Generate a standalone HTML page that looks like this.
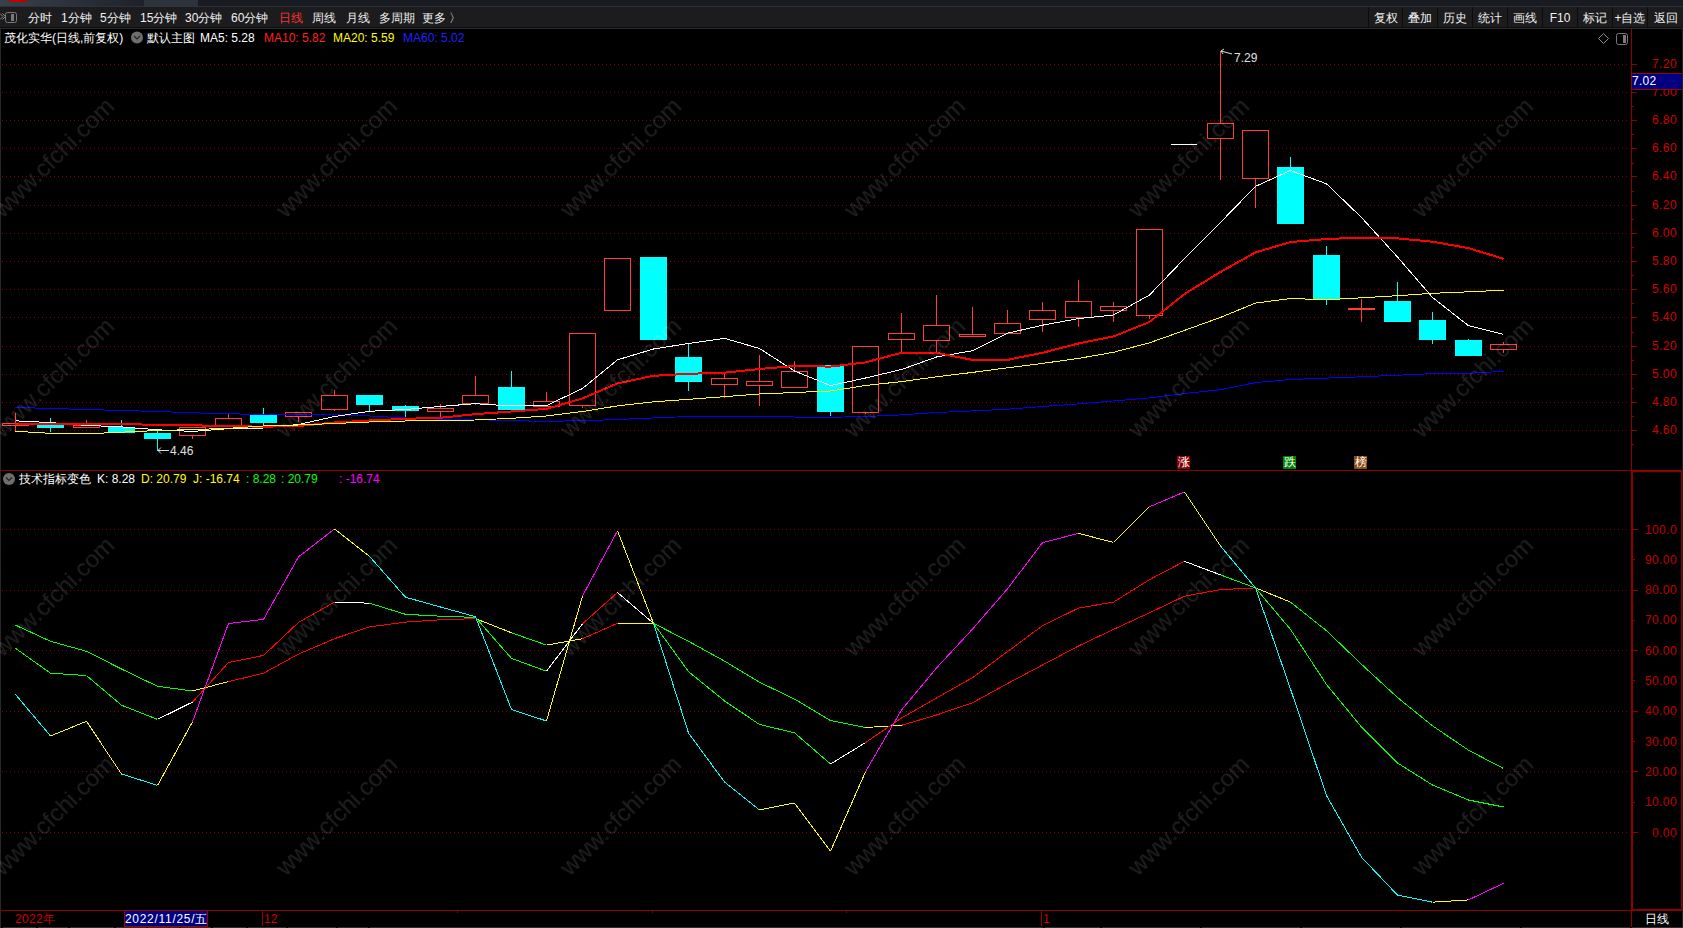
<!DOCTYPE html><html><head><meta charset="utf-8"><style>
html,body{margin:0;padding:0;background:#000;width:1683px;height:928px;overflow:hidden;}
body{position:relative;font-family:"Liberation Sans",sans-serif;}
.t{position:absolute;white-space:nowrap;font-size:12px;line-height:14px;color:#fff;}
svg{position:absolute;left:0;top:0;}
</style></head><body>
<svg width="1683" height="928" viewBox="0 0 1683 928">
<defs><linearGradient id="tg" x1="0" x2="1" y1="0" y2="0"><stop offset="0" stop-color="#39414c"/><stop offset="1" stop-color="#1d222a"/></linearGradient></defs>
<rect x="0" y="0" width="1683" height="6" fill="#181b22"/>
<rect x="0" y="0" width="144" height="6" fill="url(#tg)"/>
<rect x="144" y="0" width="54" height="6" fill="#2c333d"/>
<rect x="9" y="0" width="18" height="2" rx="1" fill="#c00000"/>
<rect x="0" y="6" width="1683" height="1" fill="#2e3238"/>
<rect x="0" y="7" width="1683" height="20" fill="#1c1c1e"/>
<rect x="0" y="27" width="1683" height="1" fill="#0e0e0e"/>
<rect x="0" y="28" width="1683" height="1" fill="#2a2a2a"/>
<rect x="1368" y="7" width="1" height="20" fill="#0c0c0c"/>
<rect x="1402" y="7" width="1" height="20" fill="#0c0c0c"/>
<rect x="1437" y="7" width="1" height="20" fill="#0c0c0c"/>
<rect x="1472" y="7" width="1" height="20" fill="#0c0c0c"/>
<rect x="1507" y="7" width="1" height="20" fill="#0c0c0c"/>
<rect x="1542" y="7" width="1" height="20" fill="#0c0c0c"/>
<rect x="1577" y="7" width="1" height="20" fill="#0c0c0c"/>
<rect x="1612" y="7" width="1" height="20" fill="#0c0c0c"/>
<rect x="1647" y="7" width="1" height="20" fill="#0c0c0c"/>
<rect x="5.5" y="12.5" width="11" height="10" rx="2" fill="none" stroke="#7a7a7a" stroke-width="1"/>
<rect x="11" y="14" width="3" height="7" fill="#7a7a7a"/>
<path d="M0 13.5 L3 16.5 L0 19.5 M2.5 13.5 L5.5 16.5 L2.5 19.5" fill="none" stroke="#8a8a8a" stroke-width="1"/>
<rect x="0" y="29" width="1" height="899" fill="#282828"/>
<rect x="1682" y="29" width="1" height="899" fill="#222"/>
<g shape-rendering="crispEdges">
<line x1="2" y1="64.5" x2="1630" y2="64.5" stroke="#8c0000" stroke-width="1" stroke-dasharray="1 3"/>
<line x1="2" y1="92.5" x2="1630" y2="92.5" stroke="#8c0000" stroke-width="1" stroke-dasharray="1 3"/>
<line x1="2" y1="120.5" x2="1630" y2="120.5" stroke="#8c0000" stroke-width="1" stroke-dasharray="1 3"/>
<line x1="2" y1="148.5" x2="1630" y2="148.5" stroke="#8c0000" stroke-width="1" stroke-dasharray="1 3"/>
<line x1="2" y1="176.5" x2="1630" y2="176.5" stroke="#8c0000" stroke-width="1" stroke-dasharray="1 3"/>
<line x1="2" y1="205.5" x2="1630" y2="205.5" stroke="#8c0000" stroke-width="1" stroke-dasharray="1 3"/>
<line x1="2" y1="233.5" x2="1630" y2="233.5" stroke="#8c0000" stroke-width="1" stroke-dasharray="1 3"/>
<line x1="2" y1="261.5" x2="1630" y2="261.5" stroke="#8c0000" stroke-width="1" stroke-dasharray="1 3"/>
<line x1="2" y1="289.5" x2="1630" y2="289.5" stroke="#8c0000" stroke-width="1" stroke-dasharray="1 3"/>
<line x1="2" y1="317.5" x2="1630" y2="317.5" stroke="#8c0000" stroke-width="1" stroke-dasharray="1 3"/>
<line x1="2" y1="346.5" x2="1630" y2="346.5" stroke="#8c0000" stroke-width="1" stroke-dasharray="1 3"/>
<line x1="2" y1="374.5" x2="1630" y2="374.5" stroke="#8c0000" stroke-width="1" stroke-dasharray="1 3"/>
<line x1="2" y1="402.5" x2="1630" y2="402.5" stroke="#8c0000" stroke-width="1" stroke-dasharray="1 3"/>
<line x1="2" y1="430.5" x2="1630" y2="430.5" stroke="#8c0000" stroke-width="1" stroke-dasharray="1 3"/>
<line x1="2" y1="529.5" x2="1630" y2="529.5" stroke="#8c0000" stroke-width="1" stroke-dasharray="1 3"/>
<line x1="2" y1="590.5" x2="1630" y2="590.5" stroke="#8c0000" stroke-width="1" stroke-dasharray="1 3"/>
<line x1="2" y1="650.5" x2="1630" y2="650.5" stroke="#8c0000" stroke-width="1" stroke-dasharray="1 3"/>
<line x1="2" y1="711.5" x2="1630" y2="711.5" stroke="#8c0000" stroke-width="1" stroke-dasharray="1 3"/>
<line x1="2" y1="771.5" x2="1630" y2="771.5" stroke="#8c0000" stroke-width="1" stroke-dasharray="1 3"/>
<line x1="2" y1="832.5" x2="1630" y2="832.5" stroke="#8c0000" stroke-width="1" stroke-dasharray="1 3"/>
<rect x="1631" y="29" width="1" height="898" fill="#900000"/>
<rect x="1" y="470" width="1630" height="1" fill="#900000"/>
<rect x="1" y="910" width="1630" height="1" fill="#900000"/>
<rect x="1632" y="470" width="50" height="2" fill="#900000"/>
<rect x="1632" y="470" width="1" height="441" fill="#900000"/>
<rect x="1681" y="470" width="1" height="441" fill="#900000"/>
<rect x="1632" y="909" width="50" height="2" fill="#900000"/>
<rect x="1632" y="64" width="5" height="1" fill="#900000"/>
<rect x="1632" y="78" width="2" height="1" fill="#900000"/>
<rect x="1632" y="92" width="5" height="1" fill="#900000"/>
<rect x="1632" y="106" width="2" height="1" fill="#900000"/>
<rect x="1632" y="120" width="5" height="1" fill="#900000"/>
<rect x="1632" y="134" width="2" height="1" fill="#900000"/>
<rect x="1632" y="148" width="5" height="1" fill="#900000"/>
<rect x="1632" y="163" width="2" height="1" fill="#900000"/>
<rect x="1632" y="176" width="5" height="1" fill="#900000"/>
<rect x="1632" y="191" width="2" height="1" fill="#900000"/>
<rect x="1632" y="205" width="5" height="1" fill="#900000"/>
<rect x="1632" y="219" width="2" height="1" fill="#900000"/>
<rect x="1632" y="233" width="5" height="1" fill="#900000"/>
<rect x="1632" y="247" width="2" height="1" fill="#900000"/>
<rect x="1632" y="261" width="5" height="1" fill="#900000"/>
<rect x="1632" y="275" width="2" height="1" fill="#900000"/>
<rect x="1632" y="289" width="5" height="1" fill="#900000"/>
<rect x="1632" y="303" width="2" height="1" fill="#900000"/>
<rect x="1632" y="317" width="5" height="1" fill="#900000"/>
<rect x="1632" y="332" width="2" height="1" fill="#900000"/>
<rect x="1632" y="346" width="5" height="1" fill="#900000"/>
<rect x="1632" y="360" width="2" height="1" fill="#900000"/>
<rect x="1632" y="374" width="5" height="1" fill="#900000"/>
<rect x="1632" y="388" width="2" height="1" fill="#900000"/>
<rect x="1632" y="402" width="5" height="1" fill="#900000"/>
<rect x="1632" y="416" width="2" height="1" fill="#900000"/>
<rect x="1632" y="430" width="5" height="1" fill="#900000"/>
<rect x="1632" y="444" width="2" height="1" fill="#900000"/>
<rect x="1632" y="832" width="6" height="1" fill="#900000"/>
<rect x="1632" y="802" width="3" height="1" fill="#900000"/>
<rect x="1632" y="771" width="6" height="1" fill="#900000"/>
<rect x="1632" y="741" width="3" height="1" fill="#900000"/>
<rect x="1632" y="711" width="6" height="1" fill="#900000"/>
<rect x="1632" y="680" width="3" height="1" fill="#900000"/>
<rect x="1632" y="650" width="6" height="1" fill="#900000"/>
<rect x="1632" y="620" width="3" height="1" fill="#900000"/>
<rect x="1632" y="590" width="6" height="1" fill="#900000"/>
<rect x="1632" y="559" width="3" height="1" fill="#900000"/>
<rect x="1632" y="529" width="6" height="1" fill="#900000"/>
<rect x="15" y="413" width="1" height="10" fill="#ff3c3c"/>
<rect x="15" y="426" width="1" height="5" fill="#ff3c3c"/>
<rect x="2.5" y="423.5" width="26" height="2" fill="#000" stroke="#ff3c3c" stroke-width="1"/>
<rect x="50" y="418" width="1" height="14" fill="#00ffff"/>
<rect x="37" y="425" width="27" height="3" fill="#00ffff"/>
<rect x="86" y="420" width="1" height="5" fill="#ff3c3c"/>
<rect x="73.5" y="425.5" width="26" height="2" fill="#000" stroke="#ff3c3c" stroke-width="1"/>
<rect x="121" y="420" width="1" height="13" fill="#00ffff"/>
<rect x="108" y="427" width="27" height="6" fill="#00ffff"/>
<rect x="157" y="431" width="1" height="20" fill="#00ffff"/>
<rect x="144" y="433" width="27" height="6" fill="#00ffff"/>
<rect x="192" y="436" width="1" height="3" fill="#ff3c3c"/>
<rect x="179.5" y="427.5" width="26" height="8" fill="#000" stroke="#ff3c3c" stroke-width="1"/>
<rect x="228" y="414" width="1" height="4" fill="#ff3c3c"/>
<rect x="215.5" y="418.5" width="26" height="8" fill="#000" stroke="#ff3c3c" stroke-width="1"/>
<rect x="263" y="408" width="1" height="17" fill="#00ffff"/>
<rect x="250" y="415" width="27" height="8" fill="#00ffff"/>
<rect x="298" y="417" width="1" height="5" fill="#ff3c3c"/>
<rect x="285.5" y="412.5" width="26" height="4" fill="#000" stroke="#ff3c3c" stroke-width="1"/>
<rect x="334" y="390" width="1" height="5" fill="#ff3c3c"/>
<rect x="334" y="410" width="1" height="1" fill="#ff3c3c"/>
<rect x="321.5" y="395.5" width="26" height="14" fill="#000" stroke="#ff3c3c" stroke-width="1"/>
<rect x="369" y="395" width="1" height="16" fill="#00ffff"/>
<rect x="356" y="395" width="27" height="10" fill="#00ffff"/>
<rect x="405" y="405" width="1" height="13" fill="#00ffff"/>
<rect x="392" y="406" width="27" height="5" fill="#00ffff"/>
<rect x="440" y="404" width="1" height="4" fill="#ff3c3c"/>
<rect x="440" y="412" width="1" height="5" fill="#ff3c3c"/>
<rect x="427.5" y="408.5" width="26" height="3" fill="#000" stroke="#ff3c3c" stroke-width="1"/>
<rect x="475" y="376" width="1" height="19" fill="#ff3c3c"/>
<rect x="475" y="404" width="1" height="1" fill="#ff3c3c"/>
<rect x="462.5" y="395.5" width="26" height="8" fill="#000" stroke="#ff3c3c" stroke-width="1"/>
<rect x="511" y="371" width="1" height="39" fill="#00ffff"/>
<rect x="498" y="387" width="27" height="23" fill="#00ffff"/>
<rect x="546" y="392" width="1" height="9" fill="#ff3c3c"/>
<rect x="533.5" y="401.5" width="26" height="5" fill="#000" stroke="#ff3c3c" stroke-width="1"/>
<rect x="582" y="406" width="1" height="2" fill="#ff3c3c"/>
<rect x="569.5" y="333.5" width="26" height="72" fill="#000" stroke="#ff3c3c" stroke-width="1"/>
<rect x="604.5" y="258.5" width="26" height="52" fill="#000" stroke="#ff3c3c" stroke-width="1"/>
<rect x="653" y="257" width="1" height="83" fill="#00ffff"/>
<rect x="640" y="257" width="27" height="83" fill="#00ffff"/>
<rect x="688" y="344" width="1" height="47" fill="#00ffff"/>
<rect x="675" y="357" width="27" height="25" fill="#00ffff"/>
<rect x="724" y="372" width="1" height="6" fill="#ff3c3c"/>
<rect x="724" y="385" width="1" height="13" fill="#ff3c3c"/>
<rect x="711.5" y="378.5" width="26" height="6" fill="#000" stroke="#ff3c3c" stroke-width="1"/>
<rect x="759" y="355" width="1" height="26" fill="#ff3c3c"/>
<rect x="759" y="386" width="1" height="20" fill="#ff3c3c"/>
<rect x="746.5" y="381.5" width="26" height="4" fill="#000" stroke="#ff3c3c" stroke-width="1"/>
<rect x="794" y="361" width="1" height="10" fill="#ff3c3c"/>
<rect x="781.5" y="371.5" width="26" height="16" fill="#000" stroke="#ff3c3c" stroke-width="1"/>
<rect x="830" y="365" width="1" height="51" fill="#00ffff"/>
<rect x="817" y="365" width="27" height="47" fill="#00ffff"/>
<rect x="865" y="413" width="1" height="1" fill="#ff3c3c"/>
<rect x="852.5" y="346.5" width="26" height="66" fill="#000" stroke="#ff3c3c" stroke-width="1"/>
<rect x="901" y="313" width="1" height="20" fill="#ff3c3c"/>
<rect x="901" y="340" width="1" height="12" fill="#ff3c3c"/>
<rect x="888.5" y="333.5" width="26" height="6" fill="#000" stroke="#ff3c3c" stroke-width="1"/>
<rect x="936" y="295" width="1" height="30" fill="#ff3c3c"/>
<rect x="936" y="341" width="1" height="11" fill="#ff3c3c"/>
<rect x="923.5" y="325.5" width="26" height="15" fill="#000" stroke="#ff3c3c" stroke-width="1"/>
<rect x="972" y="307" width="1" height="27" fill="#ff3c3c"/>
<rect x="959.5" y="334.5" width="26" height="2" fill="#000" stroke="#ff3c3c" stroke-width="1"/>
<rect x="1007" y="310" width="1" height="13" fill="#ff3c3c"/>
<rect x="994.5" y="323.5" width="26" height="10" fill="#000" stroke="#ff3c3c" stroke-width="1"/>
<rect x="1042" y="302" width="1" height="8" fill="#ff3c3c"/>
<rect x="1042" y="320" width="1" height="12" fill="#ff3c3c"/>
<rect x="1029.5" y="310.5" width="26" height="9" fill="#000" stroke="#ff3c3c" stroke-width="1"/>
<rect x="1078" y="280" width="1" height="21" fill="#ff3c3c"/>
<rect x="1078" y="318" width="1" height="9" fill="#ff3c3c"/>
<rect x="1065.5" y="301.5" width="26" height="16" fill="#000" stroke="#ff3c3c" stroke-width="1"/>
<rect x="1113" y="302" width="1" height="4" fill="#ff3c3c"/>
<rect x="1113" y="311" width="1" height="11" fill="#ff3c3c"/>
<rect x="1100.5" y="306.5" width="26" height="4" fill="#000" stroke="#ff3c3c" stroke-width="1"/>
<rect x="1149" y="316" width="1" height="3" fill="#ff3c3c"/>
<rect x="1136.5" y="229.5" width="26" height="86" fill="#000" stroke="#ff3c3c" stroke-width="1"/>
<rect x="1171" y="144" width="26" height="1" fill="#ffffff"/>
<rect x="1220" y="51" width="1" height="72" fill="#ff3c3c"/>
<rect x="1220" y="139" width="1" height="41" fill="#ff3c3c"/>
<rect x="1207.5" y="123.5" width="26" height="15" fill="#000" stroke="#ff3c3c" stroke-width="1"/>
<rect x="1255" y="179" width="1" height="29" fill="#ff3c3c"/>
<rect x="1242.5" y="130.5" width="26" height="48" fill="#000" stroke="#ff3c3c" stroke-width="1"/>
<rect x="1290" y="157" width="1" height="67" fill="#00ffff"/>
<rect x="1277" y="167" width="27" height="57" fill="#00ffff"/>
<rect x="1326" y="246" width="1" height="59" fill="#00ffff"/>
<rect x="1313" y="255" width="27" height="44" fill="#00ffff"/>
<rect x="1361" y="299" width="1" height="23" fill="#ff3c3c"/>
<rect x="1348" y="308" width="27" height="2" fill="#ff3c3c"/>
<rect x="1397" y="282" width="1" height="40" fill="#00ffff"/>
<rect x="1384" y="301" width="27" height="21" fill="#00ffff"/>
<rect x="1432" y="312" width="1" height="32" fill="#00ffff"/>
<rect x="1419" y="320" width="27" height="20" fill="#00ffff"/>
<rect x="1468" y="339" width="1" height="17" fill="#00ffff"/>
<rect x="1455" y="340" width="27" height="16" fill="#00ffff"/>
<rect x="1503" y="342" width="1" height="2" fill="#ff3c3c"/>
<rect x="1503" y="350" width="1" height="3" fill="#ff3c3c"/>
<rect x="1490.5" y="344.5" width="26" height="5" fill="#000" stroke="#ff3c3c" stroke-width="1"/>
</g>
<polyline points="15.5,407.4 50.5,408.5 86.5,409.5 121.5,410.5 157.5,411.5 192.5,412.8 228.5,413.7 263.5,414.6 298.5,414.5 334.5,414.5 369.5,416 405.5,418 440.5,419.2 475.5,419.6 511.5,420.7 546.5,421.3 582.5,420.7 617.5,419.5 653.5,418 688.5,416.5 724.5,416.5 759.5,416.8 794.5,417 830.5,417.3 865.5,416.5 901.5,414.9 936.5,412.5 972.5,410.9 1007.5,409.2 1042.5,406.5 1078.5,403.9 1113.5,401 1149.5,398 1184.5,393.5 1220.5,389.7 1255.5,382.6 1290.5,379.5 1326.5,378.1 1361.5,376.8 1397.5,375.2 1432.5,373.7 1468.5,373.3 1503.5,371.3" fill="none" stroke="#0000ff" stroke-width="1" shape-rendering="crispEdges"/>
<polyline points="15.5,420.8 50.5,422.6 86.5,425.4 121.5,426.9 157.5,429.8 192.5,431.4 228.5,428.7 263.5,428 298.5,424.5 334.5,416.5 369.5,411.3 405.5,409.5 440.5,406.4 475.5,403.7 511.5,406 546.5,405.6 582.5,388.5 617.5,359.8 653.5,349 688.5,343.5 724.5,338.3 759.5,348.5 794.5,371 830.5,385.6 865.5,378 901.5,369.5 936.5,357 972.5,350.7 1007.5,333.2 1042.5,325.2 1078.5,318.6 1113.5,315 1149.5,295 1184.5,258.5 1220.5,222.4 1255.5,186.4 1290.5,170.5 1326.5,183.8 1361.5,217.5 1397.5,257 1432.5,297.5 1468.5,325.7 1503.5,334.3" fill="none" stroke="#ffffff" stroke-width="1" shape-rendering="crispEdges"/>
<polyline points="15.5,424 50.5,424.2 86.5,424.5 121.5,424 157.5,424.9 192.5,425.3 228.5,426.1 263.5,426.7 298.5,426 334.5,422.5 369.5,420.5 405.5,418.8 440.5,417.8 475.5,414.1 511.5,411.5 546.5,408.9 582.5,398.4 617.5,383.4 653.5,375.8 688.5,373.8 724.5,372.7 759.5,369 794.5,366 830.5,366.6 865.5,362.4 901.5,352.8 936.5,352.8 972.5,359.9 1007.5,359.9 1042.5,352.8 1078.5,343.5 1113.5,336.4 1149.5,322 1184.5,294 1220.5,272 1255.5,252.4 1290.5,242.1 1326.5,239 1361.5,237.6 1397.5,238.4 1432.5,241.7 1468.5,248.1 1503.5,258.8" fill="none" stroke="#ff0000" stroke-width="2" shape-rendering="crispEdges"/>
<polyline points="15.5,431.3 50.5,433.3 86.5,433.8 121.5,432.2 157.5,430.5 192.5,429.6 228.5,428.3 263.5,426 298.5,425 334.5,423.5 369.5,422 405.5,421 440.5,420.3 475.5,420 511.5,418.3 546.5,416 582.5,411.5 617.5,405.9 653.5,401.8 688.5,399.3 724.5,396.7 759.5,394 794.5,392.5 830.5,391 865.5,385.5 901.5,381.6 936.5,376.8 972.5,372.4 1007.5,367.8 1042.5,363.4 1078.5,358.4 1113.5,352.3 1149.5,342.8 1184.5,330.4 1220.5,317.4 1255.5,303.1 1290.5,298.5 1326.5,299.8 1361.5,297.8 1397.5,295.7 1432.5,293.3 1468.5,291.8 1503.5,290.2" fill="none" stroke="#ffff00" stroke-width="1" shape-rendering="crispEdges"/>
<line x1="15.5" y1="625.1" x2="50.5" y2="641.3" stroke="#00ff00" stroke-width="1" shape-rendering="crispEdges"/>
<line x1="50.5" y1="641.3" x2="86.5" y2="651.3" stroke="#00ff00" stroke-width="1" shape-rendering="crispEdges"/>
<line x1="86.5" y1="651.3" x2="121.5" y2="669" stroke="#00ff00" stroke-width="1" shape-rendering="crispEdges"/>
<line x1="121.5" y1="669" x2="157.5" y2="686.3" stroke="#00ff00" stroke-width="1" shape-rendering="crispEdges"/>
<line x1="157.5" y1="686.3" x2="192.5" y2="691" stroke="#00ff00" stroke-width="1" shape-rendering="crispEdges"/>
<line x1="192.5" y1="691" x2="228.5" y2="681.6" stroke="#ffff00" stroke-width="1" shape-rendering="crispEdges"/>
<line x1="228.5" y1="681.6" x2="263.5" y2="673.2" stroke="#ff0000" stroke-width="1" shape-rendering="crispEdges"/>
<line x1="263.5" y1="673.2" x2="298.5" y2="654.1" stroke="#ff0000" stroke-width="1" shape-rendering="crispEdges"/>
<line x1="298.5" y1="654.1" x2="334.5" y2="638.7" stroke="#ff0000" stroke-width="1" shape-rendering="crispEdges"/>
<line x1="334.5" y1="638.7" x2="369.5" y2="626.9" stroke="#ff0000" stroke-width="1" shape-rendering="crispEdges"/>
<line x1="369.5" y1="626.9" x2="405.5" y2="622.1" stroke="#ff0000" stroke-width="1" shape-rendering="crispEdges"/>
<line x1="405.5" y1="622.1" x2="440.5" y2="619.8" stroke="#ff0000" stroke-width="1" shape-rendering="crispEdges"/>
<line x1="440.5" y1="619.8" x2="475.5" y2="618.6" stroke="#ff0000" stroke-width="1" shape-rendering="crispEdges"/>
<line x1="475.5" y1="618.6" x2="511.5" y2="632.8" stroke="#ffff00" stroke-width="1" shape-rendering="crispEdges"/>
<line x1="511.5" y1="632.8" x2="546.5" y2="645.1" stroke="#00ff00" stroke-width="1" shape-rendering="crispEdges"/>
<line x1="546.5" y1="645.1" x2="582.5" y2="638.7" stroke="#ffff00" stroke-width="1" shape-rendering="crispEdges"/>
<line x1="582.5" y1="638.7" x2="617.5" y2="623.3" stroke="#ff0000" stroke-width="1" shape-rendering="crispEdges"/>
<line x1="617.5" y1="623.3" x2="653.5" y2="623.3" stroke="#ffff00" stroke-width="1" shape-rendering="crispEdges"/>
<line x1="653.5" y1="623.3" x2="688.5" y2="641.3" stroke="#00ff00" stroke-width="1" shape-rendering="crispEdges"/>
<line x1="688.5" y1="641.3" x2="724.5" y2="661.1" stroke="#00ff00" stroke-width="1" shape-rendering="crispEdges"/>
<line x1="724.5" y1="661.1" x2="759.5" y2="682.2" stroke="#00ff00" stroke-width="1" shape-rendering="crispEdges"/>
<line x1="759.5" y1="682.2" x2="794.5" y2="699.1" stroke="#00ff00" stroke-width="1" shape-rendering="crispEdges"/>
<line x1="794.5" y1="699.1" x2="830.5" y2="720.6" stroke="#00ff00" stroke-width="1" shape-rendering="crispEdges"/>
<line x1="830.5" y1="720.6" x2="865.5" y2="727.5" stroke="#00ff00" stroke-width="1" shape-rendering="crispEdges"/>
<line x1="865.5" y1="727.5" x2="901.5" y2="725.3" stroke="#ffff00" stroke-width="1" shape-rendering="crispEdges"/>
<line x1="901.5" y1="725.3" x2="936.5" y2="715" stroke="#ff0000" stroke-width="1" shape-rendering="crispEdges"/>
<line x1="936.5" y1="715" x2="972.5" y2="702.8" stroke="#ff0000" stroke-width="1" shape-rendering="crispEdges"/>
<line x1="972.5" y1="702.8" x2="1007.5" y2="683.6" stroke="#ff0000" stroke-width="1" shape-rendering="crispEdges"/>
<line x1="1007.5" y1="683.6" x2="1042.5" y2="665" stroke="#ff0000" stroke-width="1" shape-rendering="crispEdges"/>
<line x1="1042.5" y1="665" x2="1078.5" y2="646" stroke="#ff0000" stroke-width="1" shape-rendering="crispEdges"/>
<line x1="1078.5" y1="646" x2="1113.5" y2="629.4" stroke="#ff0000" stroke-width="1" shape-rendering="crispEdges"/>
<line x1="1113.5" y1="629.4" x2="1149.5" y2="612.8" stroke="#ff0000" stroke-width="1" shape-rendering="crispEdges"/>
<line x1="1149.5" y1="612.8" x2="1184.5" y2="596.2" stroke="#ff0000" stroke-width="1" shape-rendering="crispEdges"/>
<line x1="1184.5" y1="596.2" x2="1220.5" y2="589.6" stroke="#ff0000" stroke-width="1" shape-rendering="crispEdges"/>
<line x1="1220.5" y1="589.6" x2="1255.5" y2="587.9" stroke="#ff0000" stroke-width="1" shape-rendering="crispEdges"/>
<line x1="1255.5" y1="587.9" x2="1290.5" y2="602.1" stroke="#ffff00" stroke-width="1" shape-rendering="crispEdges"/>
<line x1="1290.5" y1="602.1" x2="1326.5" y2="630.7" stroke="#00ff00" stroke-width="1" shape-rendering="crispEdges"/>
<line x1="1326.5" y1="630.7" x2="1361.5" y2="664.3" stroke="#00ff00" stroke-width="1" shape-rendering="crispEdges"/>
<line x1="1361.5" y1="664.3" x2="1397.5" y2="697.5" stroke="#00ff00" stroke-width="1" shape-rendering="crispEdges"/>
<line x1="1397.5" y1="697.5" x2="1432.5" y2="725.8" stroke="#00ff00" stroke-width="1" shape-rendering="crispEdges"/>
<line x1="1432.5" y1="725.8" x2="1468.5" y2="750.2" stroke="#00ff00" stroke-width="1" shape-rendering="crispEdges"/>
<line x1="1468.5" y1="750.2" x2="1503.5" y2="768.5" stroke="#00ff00" stroke-width="1" shape-rendering="crispEdges"/>
<line x1="15.5" y1="648.3" x2="50.5" y2="673.2" stroke="#00ff00" stroke-width="1" shape-rendering="crispEdges"/>
<line x1="50.5" y1="673.2" x2="86.5" y2="675.6" stroke="#00ff00" stroke-width="1" shape-rendering="crispEdges"/>
<line x1="86.5" y1="675.6" x2="121.5" y2="705.2" stroke="#00ff00" stroke-width="1" shape-rendering="crispEdges"/>
<line x1="121.5" y1="705.2" x2="157.5" y2="719.4" stroke="#00ff00" stroke-width="1" shape-rendering="crispEdges"/>
<line x1="157.5" y1="719.4" x2="192.5" y2="702.1" stroke="#ffffff" stroke-width="1" shape-rendering="crispEdges"/>
<line x1="192.5" y1="702.1" x2="228.5" y2="662.5" stroke="#ff0000" stroke-width="1" shape-rendering="crispEdges"/>
<line x1="228.5" y1="662.5" x2="263.5" y2="655.4" stroke="#ff0000" stroke-width="1" shape-rendering="crispEdges"/>
<line x1="263.5" y1="655.4" x2="298.5" y2="622.5" stroke="#ff0000" stroke-width="1" shape-rendering="crispEdges"/>
<line x1="298.5" y1="622.5" x2="334.5" y2="602" stroke="#ff0000" stroke-width="1" shape-rendering="crispEdges"/>
<line x1="334.5" y1="602" x2="369.5" y2="603.2" stroke="#ffffff" stroke-width="1" shape-rendering="crispEdges"/>
<line x1="369.5" y1="603.2" x2="405.5" y2="614.3" stroke="#00ff00" stroke-width="1" shape-rendering="crispEdges"/>
<line x1="405.5" y1="614.3" x2="440.5" y2="616.2" stroke="#00ff00" stroke-width="1" shape-rendering="crispEdges"/>
<line x1="440.5" y1="616.2" x2="475.5" y2="617.4" stroke="#00ff00" stroke-width="1" shape-rendering="crispEdges"/>
<line x1="475.5" y1="617.4" x2="511.5" y2="658.4" stroke="#00ff00" stroke-width="1" shape-rendering="crispEdges"/>
<line x1="511.5" y1="658.4" x2="546.5" y2="671.2" stroke="#00ff00" stroke-width="1" shape-rendering="crispEdges"/>
<line x1="546.5" y1="671.2" x2="582.5" y2="623.8" stroke="#ffffff" stroke-width="1" shape-rendering="crispEdges"/>
<line x1="582.5" y1="623.8" x2="617.5" y2="592.5" stroke="#ff0000" stroke-width="1" shape-rendering="crispEdges"/>
<line x1="617.5" y1="592.5" x2="653.5" y2="623.3" stroke="#ffffff" stroke-width="1" shape-rendering="crispEdges"/>
<line x1="653.5" y1="623.3" x2="688.5" y2="671.6" stroke="#00ff00" stroke-width="1" shape-rendering="crispEdges"/>
<line x1="688.5" y1="671.6" x2="724.5" y2="700.9" stroke="#00ff00" stroke-width="1" shape-rendering="crispEdges"/>
<line x1="724.5" y1="700.9" x2="759.5" y2="724.5" stroke="#00ff00" stroke-width="1" shape-rendering="crispEdges"/>
<line x1="759.5" y1="724.5" x2="794.5" y2="732.8" stroke="#00ff00" stroke-width="1" shape-rendering="crispEdges"/>
<line x1="794.5" y1="732.8" x2="830.5" y2="764" stroke="#00ff00" stroke-width="1" shape-rendering="crispEdges"/>
<line x1="830.5" y1="764" x2="865.5" y2="742.6" stroke="#ffffff" stroke-width="1" shape-rendering="crispEdges"/>
<line x1="865.5" y1="742.6" x2="901.5" y2="718" stroke="#ff0000" stroke-width="1" shape-rendering="crispEdges"/>
<line x1="901.5" y1="718" x2="936.5" y2="698" stroke="#ff0000" stroke-width="1" shape-rendering="crispEdges"/>
<line x1="936.5" y1="698" x2="972.5" y2="677.7" stroke="#ff0000" stroke-width="1" shape-rendering="crispEdges"/>
<line x1="972.5" y1="677.7" x2="1007.5" y2="651.6" stroke="#ff0000" stroke-width="1" shape-rendering="crispEdges"/>
<line x1="1007.5" y1="651.6" x2="1042.5" y2="625.7" stroke="#ff0000" stroke-width="1" shape-rendering="crispEdges"/>
<line x1="1042.5" y1="625.7" x2="1078.5" y2="608.1" stroke="#ff0000" stroke-width="1" shape-rendering="crispEdges"/>
<line x1="1078.5" y1="608.1" x2="1113.5" y2="602.1" stroke="#ff0000" stroke-width="1" shape-rendering="crispEdges"/>
<line x1="1113.5" y1="602.1" x2="1149.5" y2="579.6" stroke="#ff0000" stroke-width="1" shape-rendering="crispEdges"/>
<line x1="1149.5" y1="579.6" x2="1184.5" y2="561.3" stroke="#ff0000" stroke-width="1" shape-rendering="crispEdges"/>
<line x1="1184.5" y1="561.3" x2="1220.5" y2="574.9" stroke="#ffffff" stroke-width="1" shape-rendering="crispEdges"/>
<line x1="1220.5" y1="574.9" x2="1255.5" y2="587.9" stroke="#00ff00" stroke-width="1" shape-rendering="crispEdges"/>
<line x1="1255.5" y1="587.9" x2="1290.5" y2="629.4" stroke="#00ff00" stroke-width="1" shape-rendering="crispEdges"/>
<line x1="1290.5" y1="629.4" x2="1326.5" y2="684.5" stroke="#00ff00" stroke-width="1" shape-rendering="crispEdges"/>
<line x1="1326.5" y1="684.5" x2="1361.5" y2="727" stroke="#00ff00" stroke-width="1" shape-rendering="crispEdges"/>
<line x1="1361.5" y1="727" x2="1397.5" y2="763" stroke="#00ff00" stroke-width="1" shape-rendering="crispEdges"/>
<line x1="1397.5" y1="763" x2="1432.5" y2="785" stroke="#00ff00" stroke-width="1" shape-rendering="crispEdges"/>
<line x1="1432.5" y1="785" x2="1468.5" y2="800" stroke="#00ff00" stroke-width="1" shape-rendering="crispEdges"/>
<line x1="1468.5" y1="800" x2="1503.5" y2="807" stroke="#00ff00" stroke-width="1" shape-rendering="crispEdges"/>
<line x1="15.5" y1="694.5" x2="50.5" y2="736" stroke="#00ffff" stroke-width="1" shape-rendering="crispEdges"/>
<line x1="50.5" y1="736" x2="86.5" y2="721.3" stroke="#ffff00" stroke-width="1" shape-rendering="crispEdges"/>
<line x1="86.5" y1="721.3" x2="121.5" y2="774" stroke="#ffff00" stroke-width="1" shape-rendering="crispEdges"/>
<line x1="121.5" y1="774" x2="157.5" y2="785.4" stroke="#00ffff" stroke-width="1" shape-rendering="crispEdges"/>
<line x1="157.5" y1="785.4" x2="192.5" y2="721.8" stroke="#ffff00" stroke-width="1" shape-rendering="crispEdges"/>
<line x1="192.5" y1="721.8" x2="228.5" y2="623.5" stroke="#ff00ff" stroke-width="1" shape-rendering="crispEdges"/>
<line x1="228.5" y1="623.5" x2="263.5" y2="619.4" stroke="#ff00ff" stroke-width="1" shape-rendering="crispEdges"/>
<line x1="263.5" y1="619.4" x2="298.5" y2="556.9" stroke="#ff00ff" stroke-width="1" shape-rendering="crispEdges"/>
<line x1="298.5" y1="556.9" x2="334.5" y2="528.9" stroke="#ff00ff" stroke-width="1" shape-rendering="crispEdges"/>
<line x1="334.5" y1="528.9" x2="369.5" y2="556.4" stroke="#ffff00" stroke-width="1" shape-rendering="crispEdges"/>
<line x1="369.5" y1="556.4" x2="405.5" y2="597.2" stroke="#00ffff" stroke-width="1" shape-rendering="crispEdges"/>
<line x1="405.5" y1="597.2" x2="440.5" y2="607" stroke="#00ffff" stroke-width="1" shape-rendering="crispEdges"/>
<line x1="440.5" y1="607" x2="475.5" y2="616.7" stroke="#00ffff" stroke-width="1" shape-rendering="crispEdges"/>
<line x1="475.5" y1="616.7" x2="511.5" y2="709.5" stroke="#00ffff" stroke-width="1" shape-rendering="crispEdges"/>
<line x1="511.5" y1="709.5" x2="546.5" y2="721" stroke="#00ffff" stroke-width="1" shape-rendering="crispEdges"/>
<line x1="546.5" y1="721" x2="582.5" y2="596" stroke="#ffff00" stroke-width="1" shape-rendering="crispEdges"/>
<line x1="582.5" y1="596" x2="617.5" y2="530.8" stroke="#ff00ff" stroke-width="1" shape-rendering="crispEdges"/>
<line x1="617.5" y1="530.8" x2="653.5" y2="623.3" stroke="#ffff00" stroke-width="1" shape-rendering="crispEdges"/>
<line x1="653.5" y1="623.3" x2="688.5" y2="733" stroke="#00ffff" stroke-width="1" shape-rendering="crispEdges"/>
<line x1="688.5" y1="733" x2="724.5" y2="782" stroke="#00ffff" stroke-width="1" shape-rendering="crispEdges"/>
<line x1="724.5" y1="782" x2="759.5" y2="810" stroke="#00ffff" stroke-width="1" shape-rendering="crispEdges"/>
<line x1="759.5" y1="810" x2="794.5" y2="803" stroke="#ffff00" stroke-width="1" shape-rendering="crispEdges"/>
<line x1="794.5" y1="803" x2="830.5" y2="851.3" stroke="#ffff00" stroke-width="1" shape-rendering="crispEdges"/>
<line x1="830.5" y1="851.3" x2="865.5" y2="771.8" stroke="#ffff00" stroke-width="1" shape-rendering="crispEdges"/>
<line x1="865.5" y1="771.8" x2="901.5" y2="710" stroke="#ff00ff" stroke-width="1" shape-rendering="crispEdges"/>
<line x1="901.5" y1="710" x2="936.5" y2="668" stroke="#ff00ff" stroke-width="1" shape-rendering="crispEdges"/>
<line x1="936.5" y1="668" x2="972.5" y2="629.1" stroke="#ff00ff" stroke-width="1" shape-rendering="crispEdges"/>
<line x1="972.5" y1="629.1" x2="1007.5" y2="588.8" stroke="#ff00ff" stroke-width="1" shape-rendering="crispEdges"/>
<line x1="1007.5" y1="588.8" x2="1042.5" y2="542.7" stroke="#ff00ff" stroke-width="1" shape-rendering="crispEdges"/>
<line x1="1042.5" y1="542.7" x2="1078.5" y2="533.4" stroke="#ff00ff" stroke-width="1" shape-rendering="crispEdges"/>
<line x1="1078.5" y1="533.4" x2="1113.5" y2="542.4" stroke="#ffff00" stroke-width="1" shape-rendering="crispEdges"/>
<line x1="1113.5" y1="542.4" x2="1149.5" y2="506.8" stroke="#ffff00" stroke-width="1" shape-rendering="crispEdges"/>
<line x1="1149.5" y1="506.8" x2="1184.5" y2="491.9" stroke="#ff00ff" stroke-width="1" shape-rendering="crispEdges"/>
<line x1="1184.5" y1="491.9" x2="1220.5" y2="545.9" stroke="#ffff00" stroke-width="1" shape-rendering="crispEdges"/>
<line x1="1220.5" y1="545.9" x2="1255.5" y2="587.9" stroke="#00ffff" stroke-width="1" shape-rendering="crispEdges"/>
<line x1="1255.5" y1="587.9" x2="1290.5" y2="689" stroke="#00ffff" stroke-width="1" shape-rendering="crispEdges"/>
<line x1="1290.5" y1="689" x2="1326.5" y2="795.5" stroke="#00ffff" stroke-width="1" shape-rendering="crispEdges"/>
<line x1="1326.5" y1="795.5" x2="1361.5" y2="857.2" stroke="#00ffff" stroke-width="1" shape-rendering="crispEdges"/>
<line x1="1361.5" y1="857.2" x2="1397.5" y2="895.1" stroke="#00ffff" stroke-width="1" shape-rendering="crispEdges"/>
<line x1="1397.5" y1="895.1" x2="1432.5" y2="902.2" stroke="#00ffff" stroke-width="1" shape-rendering="crispEdges"/>
<line x1="1432.5" y1="902.2" x2="1468.5" y2="899.9" stroke="#ffff00" stroke-width="1" shape-rendering="crispEdges"/>
<line x1="1468.5" y1="899.9" x2="1503.5" y2="883.3" stroke="#ff00ff" stroke-width="1" shape-rendering="crispEdges"/>
<rect x="1177" y="456" width="13" height="13" fill="#8a0000"/>
<rect x="1283" y="456" width="13" height="13" fill="#008000"/>
<rect x="1354" y="456" width="13" height="13" fill="#8b4a10"/>
<rect x="124.5" y="910.5" width="83" height="16" fill="#000080" stroke="#a00000" stroke-width="1"/>
<rect x="262" y="911" width="1" height="15" fill="#900000"/>
<rect x="1041" y="911" width="1" height="15" fill="#900000"/>
<rect x="457" y="911" width="1" height="2" fill="#900000"/>
<rect x="652" y="911" width="1" height="2" fill="#900000"/>
<rect x="846" y="911" width="1" height="2" fill="#900000"/>
<rect x="1631" y="911" width="1" height="15" fill="#900000"/>
<rect x="0" y="927" width="1683" height="1" fill="#2e2e2e"/>
<rect x="1" y="927" width="2" height="1" fill="#000"/>
<rect x="36" y="927" width="2" height="1" fill="#000"/>
<rect x="68" y="927" width="2" height="1" fill="#000"/>
<rect x="114" y="927" width="2" height="1" fill="#000"/>
<rect x="146" y="927" width="2" height="1" fill="#000"/>
<rect x="179" y="927" width="2" height="1" fill="#000"/>
<rect x="211" y="927" width="2" height="1" fill="#000"/>
<rect x="246" y="927" width="2" height="1" fill="#000"/>
<rect x="286" y="927" width="2" height="1" fill="#000"/>
<rect x="336" y="927" width="2" height="1" fill="#000"/>
<rect x="368" y="927" width="2" height="1" fill="#000"/>
<rect x="1043" y="927" width="2" height="1" fill="#000"/>
<rect x="1100" y="927" width="2" height="1" fill="#000"/>
<rect x="1200" y="927" width="2" height="1" fill="#000"/>
<rect x="1300" y="927" width="2" height="1" fill="#000"/>
<rect x="1400" y="927" width="2" height="1" fill="#000"/>
<rect x="1520" y="927" width="2" height="1" fill="#000"/>
<rect x="1630" y="927" width="2" height="1" fill="#000"/>
<path d="M1603.5 33.5 L1608.5 38.5 L1603.5 43.5 L1598.5 38.5 Z" fill="none" stroke="#8a8a8a" stroke-width="1"/>
<rect x="1616.5" y="33.5" width="11" height="11" rx="2" fill="none" stroke="#7a7a7a" stroke-width="1"/>
<rect x="1623" y="35" width="3" height="8" fill="#7a7a7a"/>
<circle cx="137" cy="37.5" r="6" fill="#6e6e6e"/>
<path d="M134 36 L137 39 L140 36" fill="none" stroke="#222" stroke-width="1.2"/>
<circle cx="9" cy="479" r="6" fill="#6e6e6e"/>
<path d="M6 477.5 L9 480.5 L12 477.5" fill="none" stroke="#222" stroke-width="1.2"/>
<path d="M158 450.5 L169 450.5 M158 450.5 L161 447.5 M158 450.5 L161 453.5" stroke="#ddd" stroke-width="1" fill="none"/>
<path d="M1221 51 L1232 54 M1221 51 L1224 49 M1221 51 L1223 54" stroke="#ddd" stroke-width="1" fill="none"/>
<g style="opacity:0.999">
<text x="53" y="157" transform="rotate(-44.5 53 157)" text-anchor="middle" dominant-baseline="central" font-family="Liberation Sans" font-size="24" fill="#ffffff" fill-opacity="0.13">www.cfchi.com</text>
<text x="336" y="157" transform="rotate(-44.5 336 157)" text-anchor="middle" dominant-baseline="central" font-family="Liberation Sans" font-size="24" fill="#ffffff" fill-opacity="0.13">www.cfchi.com</text>
<text x="620" y="157" transform="rotate(-44.5 620 157)" text-anchor="middle" dominant-baseline="central" font-family="Liberation Sans" font-size="24" fill="#ffffff" fill-opacity="0.13">www.cfchi.com</text>
<text x="904" y="157" transform="rotate(-44.5 904 157)" text-anchor="middle" dominant-baseline="central" font-family="Liberation Sans" font-size="24" fill="#ffffff" fill-opacity="0.13">www.cfchi.com</text>
<text x="1188" y="157" transform="rotate(-44.5 1188 157)" text-anchor="middle" dominant-baseline="central" font-family="Liberation Sans" font-size="24" fill="#ffffff" fill-opacity="0.13">www.cfchi.com</text>
<text x="1472" y="157" transform="rotate(-44.5 1472 157)" text-anchor="middle" dominant-baseline="central" font-family="Liberation Sans" font-size="24" fill="#ffffff" fill-opacity="0.13">www.cfchi.com</text>
<text x="53" y="377" transform="rotate(-44.5 53 377)" text-anchor="middle" dominant-baseline="central" font-family="Liberation Sans" font-size="24" fill="#ffffff" fill-opacity="0.13">www.cfchi.com</text>
<text x="336" y="377" transform="rotate(-44.5 336 377)" text-anchor="middle" dominant-baseline="central" font-family="Liberation Sans" font-size="24" fill="#ffffff" fill-opacity="0.13">www.cfchi.com</text>
<text x="620" y="377" transform="rotate(-44.5 620 377)" text-anchor="middle" dominant-baseline="central" font-family="Liberation Sans" font-size="24" fill="#ffffff" fill-opacity="0.13">www.cfchi.com</text>
<text x="904" y="377" transform="rotate(-44.5 904 377)" text-anchor="middle" dominant-baseline="central" font-family="Liberation Sans" font-size="24" fill="#ffffff" fill-opacity="0.13">www.cfchi.com</text>
<text x="1188" y="377" transform="rotate(-44.5 1188 377)" text-anchor="middle" dominant-baseline="central" font-family="Liberation Sans" font-size="24" fill="#ffffff" fill-opacity="0.13">www.cfchi.com</text>
<text x="1472" y="377" transform="rotate(-44.5 1472 377)" text-anchor="middle" dominant-baseline="central" font-family="Liberation Sans" font-size="24" fill="#ffffff" fill-opacity="0.13">www.cfchi.com</text>
<text x="53" y="596" transform="rotate(-44.5 53 596)" text-anchor="middle" dominant-baseline="central" font-family="Liberation Sans" font-size="24" fill="#ffffff" fill-opacity="0.13">www.cfchi.com</text>
<text x="336" y="596" transform="rotate(-44.5 336 596)" text-anchor="middle" dominant-baseline="central" font-family="Liberation Sans" font-size="24" fill="#ffffff" fill-opacity="0.13">www.cfchi.com</text>
<text x="620" y="596" transform="rotate(-44.5 620 596)" text-anchor="middle" dominant-baseline="central" font-family="Liberation Sans" font-size="24" fill="#ffffff" fill-opacity="0.13">www.cfchi.com</text>
<text x="904" y="596" transform="rotate(-44.5 904 596)" text-anchor="middle" dominant-baseline="central" font-family="Liberation Sans" font-size="24" fill="#ffffff" fill-opacity="0.13">www.cfchi.com</text>
<text x="1188" y="596" transform="rotate(-44.5 1188 596)" text-anchor="middle" dominant-baseline="central" font-family="Liberation Sans" font-size="24" fill="#ffffff" fill-opacity="0.13">www.cfchi.com</text>
<text x="1472" y="596" transform="rotate(-44.5 1472 596)" text-anchor="middle" dominant-baseline="central" font-family="Liberation Sans" font-size="24" fill="#ffffff" fill-opacity="0.13">www.cfchi.com</text>
<text x="53" y="815" transform="rotate(-44.5 53 815)" text-anchor="middle" dominant-baseline="central" font-family="Liberation Sans" font-size="24" fill="#ffffff" fill-opacity="0.13">www.cfchi.com</text>
<text x="336" y="815" transform="rotate(-44.5 336 815)" text-anchor="middle" dominant-baseline="central" font-family="Liberation Sans" font-size="24" fill="#ffffff" fill-opacity="0.13">www.cfchi.com</text>
<text x="620" y="815" transform="rotate(-44.5 620 815)" text-anchor="middle" dominant-baseline="central" font-family="Liberation Sans" font-size="24" fill="#ffffff" fill-opacity="0.13">www.cfchi.com</text>
<text x="904" y="815" transform="rotate(-44.5 904 815)" text-anchor="middle" dominant-baseline="central" font-family="Liberation Sans" font-size="24" fill="#ffffff" fill-opacity="0.13">www.cfchi.com</text>
<text x="1188" y="815" transform="rotate(-44.5 1188 815)" text-anchor="middle" dominant-baseline="central" font-family="Liberation Sans" font-size="24" fill="#ffffff" fill-opacity="0.13">www.cfchi.com</text>
<text x="1472" y="815" transform="rotate(-44.5 1472 815)" text-anchor="middle" dominant-baseline="central" font-family="Liberation Sans" font-size="24" fill="#ffffff" fill-opacity="0.13">www.cfchi.com</text>
</g>
</svg>
<div class="t" style="left:28px;top:10.5px;color:#f0f0f0;font-size:12px;">分时</div>
<div class="t" style="left:61px;top:10.5px;color:#f0f0f0;font-size:12px;">1分钟</div>
<div class="t" style="left:100px;top:10.5px;color:#f0f0f0;font-size:12px;">5分钟</div>
<div class="t" style="left:140px;top:10.5px;color:#f0f0f0;font-size:12px;">15分钟</div>
<div class="t" style="left:185px;top:10.5px;color:#f0f0f0;font-size:12px;">30分钟</div>
<div class="t" style="left:231px;top:10.5px;color:#f0f0f0;font-size:12px;">60分钟</div>
<div class="t" style="left:279px;top:10.5px;color:#ff3030;font-size:12px;">日线</div>
<div class="t" style="left:312px;top:10.5px;color:#f0f0f0;font-size:12px;">周线</div>
<div class="t" style="left:346px;top:10.5px;color:#f0f0f0;font-size:12px;">月线</div>
<div class="t" style="left:379px;top:10.5px;color:#f0f0f0;font-size:12px;">多周期</div>
<div class="t" style="left:422px;top:10.5px;color:#f0f0f0;font-size:12px;">更多 〉</div>
<div class="t" style="left:1369px;top:10.5px;width:33px;text-align:center;color:#f0f0f0">复权</div>
<div class="t" style="left:1403px;top:10.5px;width:34px;text-align:center;color:#f0f0f0">叠加</div>
<div class="t" style="left:1438px;top:10.5px;width:34px;text-align:center;color:#f0f0f0">历史</div>
<div class="t" style="left:1473px;top:10.5px;width:34px;text-align:center;color:#f0f0f0">统计</div>
<div class="t" style="left:1508px;top:10.5px;width:34px;text-align:center;color:#f0f0f0">画线</div>
<div class="t" style="left:1543px;top:10.5px;width:34px;text-align:center;color:#f0f0f0">F10</div>
<div class="t" style="left:1578px;top:10.5px;width:34px;text-align:center;color:#f0f0f0">标记</div>
<div class="t" style="left:1613px;top:10.5px;width:34px;text-align:center;color:#f0f0f0">+自选</div>
<div class="t" style="left:1648px;top:10.5px;width:35px;text-align:center;color:#f0f0f0">返回</div>
<div class="t" style="left:4px;top:30.7px;color:#fff;font-size:12px;">茂化实华(日线,前复权)</div>
<div class="t" style="left:147px;top:30.7px;color:#fff;font-size:12px;">默认主图</div>
<div class="t" style="left:200px;top:30.7px;color:#fff;font-size:12px;">MA5: 5.28</div>
<div class="t" style="left:264px;top:30.7px;color:#ff2020;font-size:12px;">MA10: 5.82</div>
<div class="t" style="left:333px;top:30.7px;color:#ffff00;font-size:12px;">MA20: 5.59</div>
<div class="t" style="left:403px;top:30.7px;color:#2020ff;font-size:12px;">MA60: 5.02</div>
<div class="t" style="left:19px;top:471.8px;color:#fff;font-size:12px;">技术指标变色</div>
<div class="t" style="left:97px;top:471.8px;color:#fff;font-size:12px;">K: 8.28</div>
<div class="t" style="left:141px;top:471.8px;color:#ffff00;font-size:12px;">D: 20.79</div>
<div class="t" style="left:193px;top:471.8px;color:#ffff00;font-size:12px;">J: -16.74</div>
<div class="t" style="left:246px;top:471.8px;color:#00ff00;font-size:12px;">: 8.28</div>
<div class="t" style="left:281px;top:471.8px;color:#00ff00;font-size:12px;">: 20.79</div>
<div class="t" style="left:339px;top:471.8px;color:#ff00ff;font-size:12px;">: -16.74</div>
<div class="t" style="left:1630px;top:57px;width:47px;text-align:right;color:#d00000;letter-spacing:0.4px">7.20</div>
<div class="t" style="left:1630px;top:85px;width:47px;text-align:right;color:#d00000;letter-spacing:0.4px">7.00</div>
<div class="t" style="left:1630px;top:113px;width:47px;text-align:right;color:#d00000;letter-spacing:0.4px">6.80</div>
<div class="t" style="left:1630px;top:141px;width:47px;text-align:right;color:#d00000;letter-spacing:0.4px">6.60</div>
<div class="t" style="left:1630px;top:169px;width:47px;text-align:right;color:#d00000;letter-spacing:0.4px">6.40</div>
<div class="t" style="left:1630px;top:198px;width:47px;text-align:right;color:#d00000;letter-spacing:0.4px">6.20</div>
<div class="t" style="left:1630px;top:226px;width:47px;text-align:right;color:#d00000;letter-spacing:0.4px">6.00</div>
<div class="t" style="left:1630px;top:254px;width:47px;text-align:right;color:#d00000;letter-spacing:0.4px">5.80</div>
<div class="t" style="left:1630px;top:282px;width:47px;text-align:right;color:#d00000;letter-spacing:0.4px">5.60</div>
<div class="t" style="left:1630px;top:310px;width:47px;text-align:right;color:#d00000;letter-spacing:0.4px">5.40</div>
<div class="t" style="left:1630px;top:339px;width:47px;text-align:right;color:#d00000;letter-spacing:0.4px">5.20</div>
<div class="t" style="left:1630px;top:367px;width:47px;text-align:right;color:#d00000;letter-spacing:0.4px">5.00</div>
<div class="t" style="left:1630px;top:395px;width:47px;text-align:right;color:#d00000;letter-spacing:0.4px">4.80</div>
<div class="t" style="left:1630px;top:423px;width:47px;text-align:right;color:#d00000;letter-spacing:0.4px">4.60</div>
<div class="t" style="left:1630px;top:825.5px;width:47px;text-align:right;color:#c00000;letter-spacing:0.4px">0.00</div>
<div class="t" style="left:1630px;top:795.2px;width:47px;text-align:right;color:#c00000;letter-spacing:0.4px">10.00</div>
<div class="t" style="left:1630px;top:764.9px;width:47px;text-align:right;color:#c00000;letter-spacing:0.4px">20.00</div>
<div class="t" style="left:1630px;top:734.6px;width:47px;text-align:right;color:#c00000;letter-spacing:0.4px">30.00</div>
<div class="t" style="left:1630px;top:704.3px;width:47px;text-align:right;color:#c00000;letter-spacing:0.4px">40.00</div>
<div class="t" style="left:1630px;top:674px;width:47px;text-align:right;color:#c00000;letter-spacing:0.4px">50.00</div>
<div class="t" style="left:1630px;top:643.7px;width:47px;text-align:right;color:#c00000;letter-spacing:0.4px">60.00</div>
<div class="t" style="left:1630px;top:613.4px;width:47px;text-align:right;color:#c00000;letter-spacing:0.4px">70.00</div>
<div class="t" style="left:1630px;top:583.1px;width:47px;text-align:right;color:#c00000;letter-spacing:0.4px">80.00</div>
<div class="t" style="left:1630px;top:552.8px;width:47px;text-align:right;color:#c00000;letter-spacing:0.4px">90.00</div>
<div class="t" style="left:1630px;top:522.5px;width:47px;text-align:right;color:#c00000;letter-spacing:0.4px">100.0</div>
<div style="position:absolute;left:1631px;top:73px;width:50px;height:15px;background:#000080;border:1px solid #a00000;border-right:none"></div>
<div class="t" style="left:1632px;top:74px;color:#fff;font-size:12px;letter-spacing:0.3px">7.02</div>
<div class="t" style="left:15px;top:912px;color:#d00000;font-size:12px;letter-spacing:0.3px">2022年</div>
<div class="t" style="left:125px;top:911.7px;color:#fff;font-size:12px;letter-spacing:0.7px">2022/11/25/五</div>
<div class="t" style="left:264px;top:912px;color:#d00000;font-size:12px;">12</div>
<div class="t" style="left:1043px;top:912px;color:#d00000;font-size:12px;">1</div>
<div class="t" style="left:1645px;top:911.5px;color:#fff;font-size:12px;">日线</div>
<div class="t" style="left:170px;top:444px;color:#e0e0e0;font-size:12px;">4.46</div>
<div class="t" style="left:1234px;top:51px;color:#e0e0e0;font-size:12px;">7.29</div>
<div class="t" style="left:1177px;top:456px;width:13px;text-align:center;font-size:12px;line-height:13px;">涨</div>
<div class="t" style="left:1283px;top:456px;width:13px;text-align:center;font-size:12px;line-height:13px;">跌</div>
<div class="t" style="left:1354px;top:456px;width:13px;text-align:center;font-size:12px;line-height:13px;">榜</div>
</body></html>
